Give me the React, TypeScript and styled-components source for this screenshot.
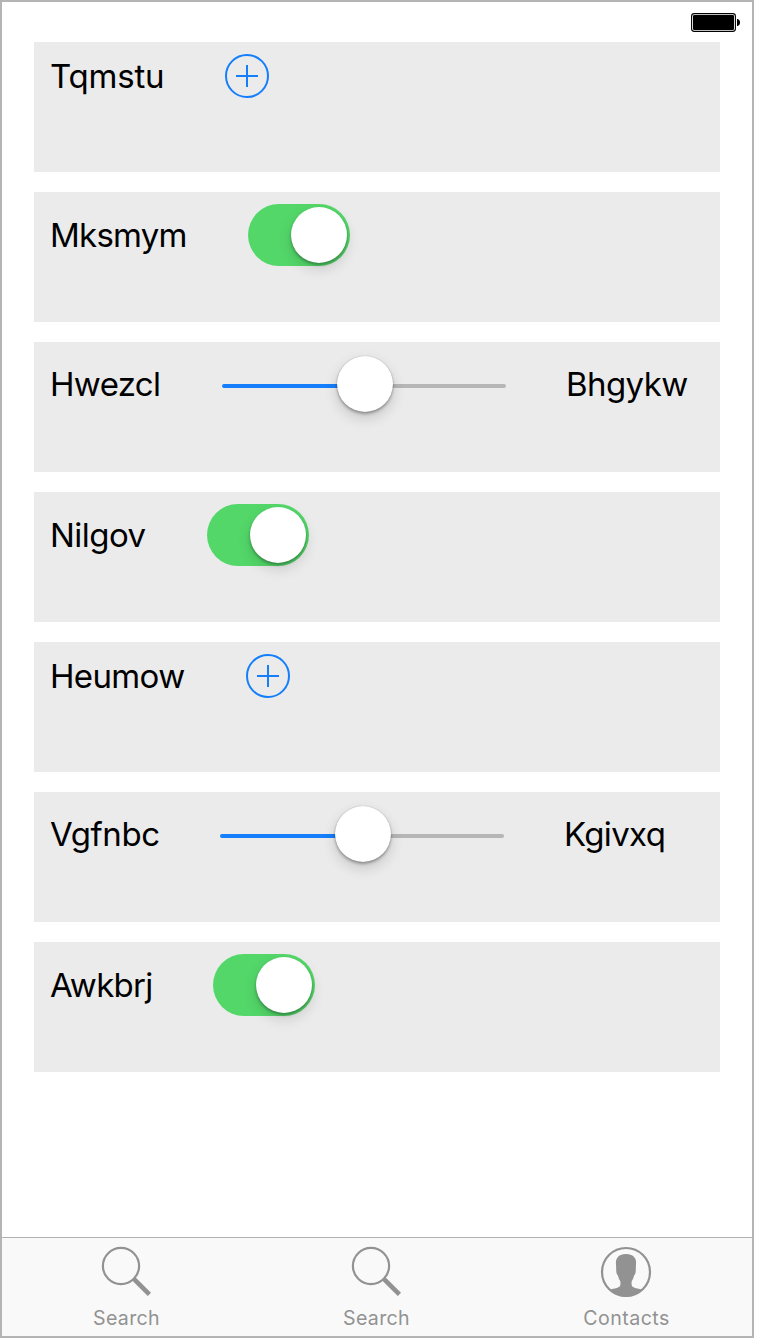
import React from "react";
import styled, { createGlobalStyle } from "styled-components";

const GlobalStyle = createGlobalStyle`
  *, *::before, *::after { box-sizing: border-box; }
  body { margin: 0; background: #fff; font-family: Inter, "Liberation Sans", sans-serif; }
`;

const Screen = styled.div`
  width: 754px;
  height: 1338px;
  display: flex;
  flex-direction: column;
  border: 2px solid #b4b4b4;
  background: #fff;
`;

const StatusBar = styled.header`
  height: 40px;
  flex: none;
  display: flex;
  justify-content: flex-end;
  padding: 11px 12px 0 0;
`;

const List = styled.main`
  flex: 1;
  display: flex;
  flex-direction: column;
  gap: 20px;
  padding: 0 32px;
`;

const Card = styled.section`
  height: 130px;
  padding: 12px 16px;
  background: #ebebeb;
`;

const Row = styled.div<{ $height: number }>`
  height: ${(p) => p.$height}px;
  display: flex;
  align-items: center;
`;

const Label = styled.span<{ $width?: number; $tracking: number }>`
  flex: none;
  width: ${(p) => (p.$width ? `${p.$width}px` : "auto")};
  font-size: 33px;
  line-height: 40px;
  letter-spacing: ${(p) => p.$tracking}px;
  white-space: nowrap;
  color: #000;
`;

const AddButton = styled.button`
  width: 44px;
  height: 44px;
  padding: 0;
  border: 0;
  background: none;
  svg { display: block; }
`;

const SwitchTrack = styled.div`
  width: 102px;
  height: 62px;
  display: flex;
  justify-content: flex-end;
  padding: 3px;
  border-radius: 31px;
  background: #53d769;
`;

const SwitchThumb = styled.div`
  width: 56px;
  height: 56px;
  border-radius: 50%;
  background: #fff;
  box-shadow: 0 6px 14px rgba(0, 0, 0, 0.14), 0 2px 3px rgba(0, 0, 0, 0.3);
`;

const SliderBox = styled.div`
  width: 284px;
  height: 56px;
  margin-right: 60px;
  display: flex;
  align-items: center;
`;

const SliderLine = styled.div<{ $side: "left" | "right" }>`
  flex: 1;
  height: 4px;
  margin-top: 4px;
  background: ${(p) => (p.$side === "left" ? "#147efb" : "#b6b6b6")};
  border-radius: ${(p) => (p.$side === "left" ? "2px 0 0 2px" : "0 2px 2px 0")};
  margin-${(p) => (p.$side === "left" ? "right" : "left")}: -4px;
`;

const SliderThumb = styled.div`
  position: relative;
  z-index: 1;
  width: 56px;
  height: 56px;
  margin-left: 1px;
  margin-right: -1px;
  border-radius: 50%;
  background: #fff;
  box-shadow: 0 6px 14px rgba(0, 0, 0, 0.16), 0 2px 3px rgba(0, 0, 0, 0.3), 0 0 1px rgba(0, 0, 0, 0.3);
`;

const TabBar = styled.nav`
  height: 99px;
  flex: none;
  display: flex;
  border-top: 1px solid #b2b2b2;
  background: #f9f9f9;
`;

const Tab = styled.div`
  width: 250px;
  display: flex;
  flex-direction: column;
  align-items: center;
  padding: 8px 2px 0 0;
  svg { display: block; }
`;

const TabLabel = styled.span<{ $tracking: number }>`
  margin-top: 10px;
  margin-left: 1px;
  font-size: 19.6px;
  line-height: 24px;
  letter-spacing: ${(p) => p.$tracking}px;
  color: #929292;
`;

const BatteryIcon = () => (
  <svg width="50" height="20" viewBox="0 0 50 20">
    <rect x="1.6" y="0.6" width="43.8" height="17.8" rx="2.6" fill="#fff" stroke="#000" strokeWidth="1.1" />
    <rect x="3" y="2" width="41" height="15" rx="1.2" fill="#000" />
    <path d="M47 6h.6c1.6.6 2.4 1.8 2.4 3.5s-.8 2.9-2.4 3.5H47z" fill="#000" />
  </svg>
);

const Add = () => (
  <AddButton aria-label="Add">
    <svg width="44" height="44" viewBox="0 0 44 44" fill="none" stroke="#147efb" strokeWidth="2">
      <circle cx="22" cy="22" r="21" />
      <path d="M11 22h22M22 11v22" />
    </svg>
  </AddButton>
);

const Switch = () => (
  <SwitchTrack role="switch" aria-checked="true">
    <SwitchThumb />
  </SwitchTrack>
);

const Slider = () => (
  <SliderBox>
    <SliderLine $side="left" />
    <SliderThumb />
    <SliderLine $side="right" />
  </SliderBox>
);

const SearchIcon = () => (
  <svg width="50" height="50" viewBox="0 0 50 50" fill="none" stroke="#929292">
    <circle cx="20" cy="20" r="18.1" strokeWidth="2.2" />
    <path d="M32.8 32.8L48.4 48.4" strokeWidth="4.6" />
  </svg>
);

const ContactIcon = () => (
  <svg width="50" height="50" viewBox="0 -1 50 50" overflow="visible">
    <circle cx="25" cy="25" r="24" fill="none" stroke="#929292" strokeWidth="2.2" />
    <path
      d="M9.3 42.6C13 41.2 17.6 41.2 19 38.9C19.6 37.8 19.5 35.8 19.3 34.2C18 32.4 17.4 30.6 17 28.6C15.6 27.4 15 25 15.2 20.9C14.8 16 14.6 13.4 16.2 11C18 8 21 7 25 7S32 8 33.8 11C35.4 13.4 35.2 16 34.8 20.9C35 25 34.4 27.4 33 28.6C32.6 30.6 32 32.4 30.7 34.2C30.5 35.8 30.4 37.8 31 38.9C32.4 41.2 37 41.2 40.7 42.6C36 47.5 31 49.6 25 49.6S14 47.5 9.3 42.6Z"
      fill="#929292"
    />
  </svg>
);

type Item = {
  kind: "add" | "switch" | "slider";
  label: string;
  width: number;
  tracking: number;
  trailing?: string;
  trailingTracking?: number;
};

const items: Item[] = [
  { kind: "add", label: "Tqmstu", width: 175, tracking: -0.2 },
  { kind: "switch", label: "Mksmym", width: 198, tracking: -0.75 },
  { kind: "slider", label: "Hwezcl", width: 172, tracking: -0.65, trailing: "Bhgykw", trailingTracking: -0.6 },
  { kind: "switch", label: "Nilgov", width: 157, tracking: -0.55 },
  { kind: "add", label: "Heumow", width: 196, tracking: -0.65 },
  { kind: "slider", label: "Vgfnbc", width: 170, tracking: -0.4, trailing: "Kgivxq", trailingTracking: -0.65 },
  { kind: "switch", label: "Awkbrj", width: 163, tracking: -0.7 },
];

const controls = { add: Add, switch: Switch, slider: Slider };
const rowHeights = { add: 44, switch: 62, slider: 60 };

export default function App() {
  return (
    <>
      <GlobalStyle />
      <Screen>
        <StatusBar>
          <BatteryIcon />
        </StatusBar>
        <List>
          {items.map((item) => {
            const Control = controls[item.kind];
            return (
              <Card key={item.label}>
                <Row $height={rowHeights[item.kind]}>
                  <Label $width={item.width} $tracking={item.tracking}>{item.label}</Label>
                  <Control />
                  {item.trailing && <Label $tracking={item.trailingTracking ?? 0}>{item.trailing}</Label>}
                </Row>
              </Card>
            );
          })}
        </List>
        <TabBar>
          <Tab>
            <SearchIcon />
            <TabLabel $tracking={0.3}>Search</TabLabel>
          </Tab>
          <Tab>
            <SearchIcon />
            <TabLabel $tracking={0.3}>Search</TabLabel>
          </Tab>
          <Tab>
            <ContactIcon />
            <TabLabel $tracking={0.45}>Contacts</TabLabel>
          </Tab>
        </TabBar>
      </Screen>
    </>
  );
}
